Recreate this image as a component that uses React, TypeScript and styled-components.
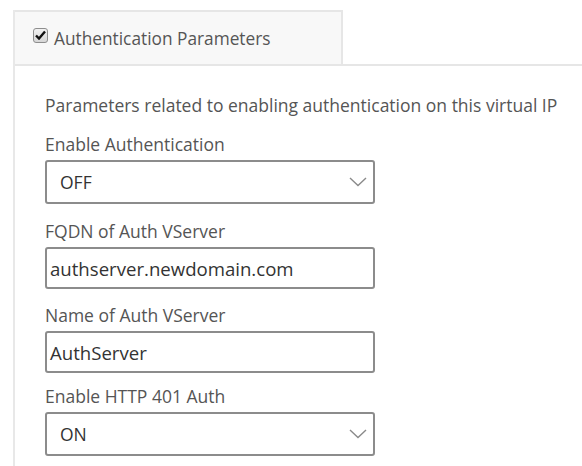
import React from "react";
import styled, { createGlobalStyle } from "styled-components";

const Global = createGlobalStyle`
  html, body { margin: 0; padding: 0; background: #ffffff; }
  body { font-family: "Open Sans", "Noto Sans", sans-serif; }
`;

const Page = styled.div`
  width: 582px;
  height: 466px;
  overflow: hidden;
  padding-top: 10px;
  box-sizing: border-box;
`;

const Panel = styled.div`
  margin-left: 13px;
  border-left: 2px solid #e8e8e8;
  height: 456px;
`;

const TabRow = styled.div`
  display: flex;
  border-bottom: 2px solid #e6e6e6;
`;

const Tab = styled.div`
  width: 328px;
  height: 54px;
  box-sizing: border-box;
  border-top: 2px solid #e6e6e6;
  border-right: 2px solid #e6e6e6;
  background: #f8f8f8;
  display: flex;
  align-items: center;
  gap: 6px;
  padding-left: 18px;
`;

const CheckBox = styled.span`
  width: 13px;
  height: 13px;
  border: 1px solid #8e8e8e;
  border-radius: 3px;
  background: linear-gradient(#f2f2f2, #d6d6d6);
  display: inline-flex;
  align-items: center;
  justify-content: center;
  margin-top: -6px;
`;

const TabTitle = styled.span`
  font-size: 17.3px;
  color: #555555;
`;

const Body = styled.div`
  padding: 27px 0 0 30px;
  display: flex;
  flex-direction: column;
`;

const Description = styled.div`
  font-size: 17.5px;
  color: #555555;
  line-height: 24px;
  white-space: nowrap;
  margin-bottom: 15px;
`;

const Field = styled.div<{ $gap?: number }>`
  display: flex;
  flex-direction: column;
  margin-bottom: ${(p) => p.$gap ?? 14}px;
`;

const Label = styled.div`
  font-size: 17.5px;
  color: #555555;
  line-height: 24px;
  margin-bottom: 4px;
`;

const Box = styled.div<{ $select?: boolean }>`
  width: 330px;
  height: ${(p) => (p.$select ? 44 : 42)}px;
  box-sizing: border-box;
  border: 2px solid #8c8c8c;
  border-radius: 3px;
  display: flex;
  align-items: center;
  justify-content: space-between;
  padding: ${(p) => (p.$select ? "0 6px 0 13px" : "0 3px")};
  font-size: ${(p) => (p.$select ? 17.5 : 18.6)}px;
  color: #333333;
`;

const Chevron = () => (
  <svg width="18" height="10" viewBox="0 0 18 10">
    <path d="M1 1 L9 8.5 L17 1" fill="none" stroke="#8a8a8a" strokeWidth="1.4" />
  </svg>
);

const Check = () => (
  <svg width="11" height="10" viewBox="0 0 11 10">
    <path d="M1 5.5 L4 8.5 L10 1.5" fill="none" stroke="#111" strokeWidth="2.4" />
  </svg>
);

export default function App() {
  return (
    <>
      <Global />
      <Page>
        <Panel>
          <TabRow>
            <Tab>
              <CheckBox>
                <Check />
              </CheckBox>
              <TabTitle>Authentication Parameters</TabTitle>
            </Tab>
          </TabRow>
          <Body>
            <Description>Parameters related to enabling authentication on this virtual IP</Description>
            <Field $gap={15}>
              <Label>Enable Authentication</Label>
              <Box $select>
                <span>OFF</span>
                <Chevron />
              </Box>
            </Field>
            <Field $gap={14}>
              <Label>FQDN of Auth VServer</Label>
              <Box>authserver.newdomain.com</Box>
            </Field>
            <Field $gap={11}>
              <Label>Name of Auth VServer</Label>
              <Box>AuthServer</Box>
            </Field>
            <Field>
              <Label>Enable HTTP 401 Auth</Label>
              <Box $select>
                <span>ON</span>
                <Chevron />
              </Box>
            </Field>
          </Body>
        </Panel>
      </Page>
    </>
  );
}
